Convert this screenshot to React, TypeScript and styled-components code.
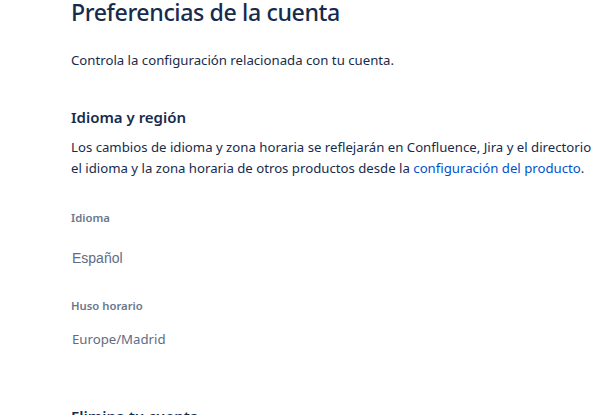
import styled, { createGlobalStyle } from 'styled-components';

const GlobalStyle = createGlobalStyle`
    html, body {
        margin: 0;
        padding: 0;
        background: #ffffff;
        overflow: hidden;
    }
    body {
        font-family: 'Noto Sans', 'Open Sans', sans-serif;
        color: #172b4d;
    }
`;

export default function App() {
    return (
        <>
            <GlobalStyle />
            <Page>
                <Heading>Preferencias de la cuenta</Heading>
                <Intro>Controla la configuración relacionada con tu cuenta.</Intro>

                <Section $gap={37}>
                    <SectionTitle>Idioma y región</SectionTitle>
                    <Paragraph>
                        Los cambios de idioma y zona horaria se reflejarán en Confluence, Jira y el directorio de
                        Atlassian.
                        <br />
                        el idioma y la zona horaria de otros productos desde la{' '}
                        <Link href="#">configuración del producto</Link>.
                    </Paragraph>

                    <Field $gap={31}>
                        <Label>Idioma</Label>
                        <Value $select>Español</Value>
                    </Field>
                    <Field $gap={30}>
                        <Label>Huso horario</Label>
                        <Value>Europe/Madrid</Value>
                    </Field>
                </Section>

                <Section $gap={57}>
                    <SectionTitle>Elimina tu cuenta</SectionTitle>
                </Section>
            </Page>
        </>
    );
}

const Page = styled.div`
    display: flex;
    flex-direction: column;
    width: 800px;
    padding-left: 71px;
`;

const Heading = styled.h1`
    margin: -2px 0 0;
    font-size: 23.2px;
    line-height: 28px;
    letter-spacing: -0.4px;
    font-weight: 500;
    color: #172b4d;
`;

const Intro = styled.p`
    margin: 24px 0 0;
    font-size: 13.2px;
    line-height: 20px;
`;

const Section = styled.div<{ $gap: number }>`
    display: flex;
    flex-direction: column;
    margin-top: ${(p) => p.$gap}px;
`;

const SectionTitle = styled.h2`
    margin: 0;
    font-size: 15px;
    line-height: 20px;
    font-weight: 600;
`;

const Paragraph = styled.p`
    margin: 10px 0 0;
    font-size: 13.2px;
    line-height: 21px;
    white-space: nowrap;
`;

const Link = styled.a`
    color: #0052cc;
    text-decoration: none;
`;

const Field = styled.div<{ $gap: number }>`
    display: flex;
    flex-direction: column;
    margin-top: ${(p) => p.$gap}px;
`;

const Label = styled.div`
    font-size: 11.3px;
    line-height: 16px;
    font-weight: 600;
    color: #6b778c;
`;

const Value = styled.div<{ $select?: boolean }>`
    margin-top: ${(p) => (p.$select ? 22 : 15)}px;
    padding-left: 1px;
    font-family: ${(p) => (p.$select ? "'Liberation Sans', Arial, sans-serif" : "'Noto Sans', sans-serif")};
    font-size: ${(p) => (p.$select ? 14 : 13.2)}px;
    line-height: 20px;
    color: #5e6c84;
`;
